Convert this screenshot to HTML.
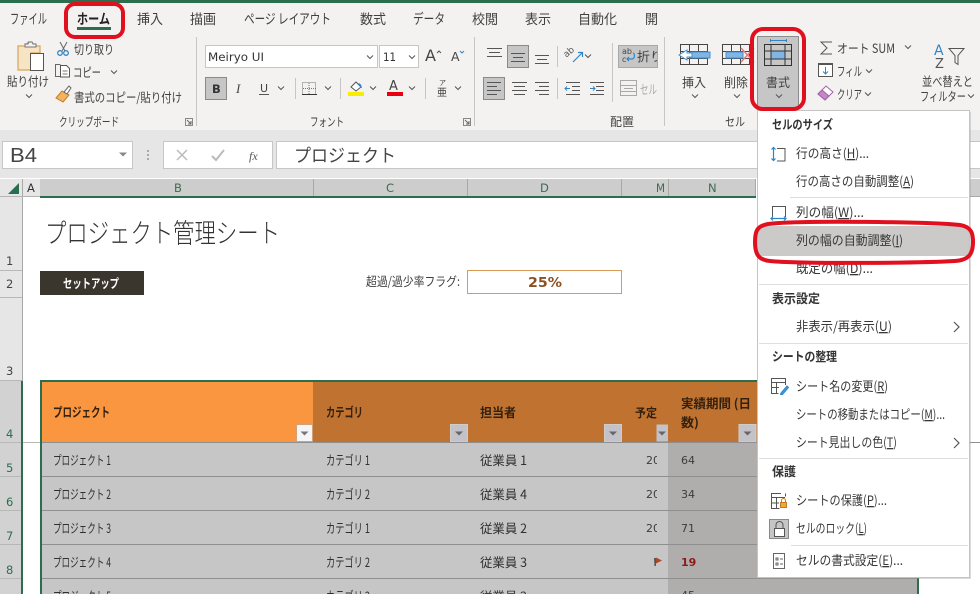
<!DOCTYPE html>
<html lang="ja"><head><meta charset="utf-8"><title>Excel</title>
<style>
html,body{margin:0;padding:0;background:#fff;width:980px;height:594px;overflow:hidden}
svg{display:block;position:absolute;left:0;top:0}
text{font-family:"Liberation Sans","Noto Sans CJK JP",sans-serif;fill:#404040;font-size:11.5px;white-space:pre}
.j{font-family:"Noto Sans CJK JP","Liberation Sans",sans-serif;font-weight:400}
.l{font-family:"Noto Sans CJK JP","Liberation Sans",sans-serif;font-weight:300}
.b{font-family:"Noto Sans CJK JP","Liberation Sans",sans-serif;font-weight:700}
.m{font-family:"Noto Sans CJK JP",sans-serif;font-weight:400;fill:#383838;font-size:13px}
.h{font-family:"Noto Sans CJK JP",sans-serif;font-weight:700;fill:#333;font-size:12.5px}
.u{text-decoration:underline}
</style></head><body>
<svg width="980" height="594" viewBox="0 0 980 594" xmlns="http://www.w3.org/2000/svg">
<defs>
<path id="v" d="M-3 -1.5L0 1.5L3 -1.5" fill="none" stroke="#555" stroke-width="1"/>
<g id="fb"><rect width="17" height="17" fill="#c2c2c8" stroke="#d0ccc8" stroke-width="1"/><path d="M4.5 7h8l-4 4z" fill="#666"/></g>
</defs>

<!-- base -->
<rect width="980" height="594" fill="#fff"/>
<rect width="980" height="130" fill="#f3f2f1"/>
<rect width="980" height="3" fill="#2b6e4e"/>
<rect y="130" width="980" height="48" fill="#e6e6e6"/>

<!-- tabs -->
<text class="j" style="font-size:14px" x="10" y="24" textLength="37" lengthAdjust="spacingAndGlyphs">ファイル</text>
<text class="b" style="font-size:14px;fill:#222" x="77" y="24" textLength="33" lengthAdjust="spacingAndGlyphs">ホーム</text>
<rect x="77" y="27" width="34" height="3" fill="#2b6e4e"/>
<text class="j" style="font-size:13.5px" x="137" y="24" textLength="26" lengthAdjust="spacingAndGlyphs">挿入</text>
<text class="j" style="font-size:13.5px" x="190" y="24" textLength="26" lengthAdjust="spacingAndGlyphs">描画</text>
<text class="j" style="font-size:14px" x="244" y="24" textLength="87" lengthAdjust="spacingAndGlyphs">ページ レイアウト</text>
<text class="j" style="font-size:13.5px" x="360" y="24" textLength="26" lengthAdjust="spacingAndGlyphs">数式</text>
<text class="j" style="font-size:14px" x="413" y="24" textLength="32" lengthAdjust="spacingAndGlyphs">データ</text>
<text class="j" style="font-size:13.5px" x="472" y="24" textLength="26" lengthAdjust="spacingAndGlyphs">校閲</text>
<text class="j" style="font-size:13.5px" x="525" y="24" textLength="26" lengthAdjust="spacingAndGlyphs">表示</text>
<text class="j" style="font-size:13.5px" x="578" y="24" textLength="39" lengthAdjust="spacingAndGlyphs">自動化</text>
<text class="j" style="font-size:13.5px" x="645" y="24" textLength="13" lengthAdjust="spacingAndGlyphs">開</text>

<!-- group separators -->
<g fill="#c8c6c4">
<rect x="196" y="37" width="1" height="89"/><rect x="474" y="37" width="1" height="89"/><rect x="664" y="37" width="1" height="89"/>
<rect x="295" y="78" width="1" height="21"/><rect x="340" y="78" width="1" height="21"/><rect x="425" y="78" width="1" height="21"/>
<rect x="557" y="46" width="1" height="21"/><rect x="557" y="78" width="1" height="21"/><rect x="612" y="43" width="1" height="59"/>
</g>

<!-- clipboard -->
<path d="M18 46h7v-2h2l1-2h4l1 2h2v2h5v7h-9v17h-13z" fill="#f6e4c4" stroke="#d9a45a" stroke-width="1.2"/>
<path d="M25 47v-3h3l1-2h3l1 2h3v3z" fill="#f3f2f1" stroke="#777"/>
<rect x="30.500" y="53.500" width="13" height="17" fill="#fff" stroke="#555"/>
<text class="j" style="font-size:12.5px" x="7" y="86" textLength="42" lengthAdjust="spacingAndGlyphs">貼り付け</text>
<use href="#v" x="29" y="96"/>
<path d="M60 42l5 9M67 42l-5 9" stroke="#666" fill="none"/><circle cx="60" cy="53" r="2.300" fill="none" stroke="#2e86c8" stroke-width="1.300"/><circle cx="66" cy="53" r="2.300" fill="none" stroke="#2e86c8" stroke-width="1.300"/>
<text class="j" style="font-size:12.5px" x="74" y="54" textLength="40" lengthAdjust="spacingAndGlyphs">切り取り</text>
<path d="M61 76.500h-5.500v-12h5" fill="none" stroke="#666"/><path d="M60.500 65.500h6l3 3v8.500h-9z" fill="#fff" stroke="#555"/><path d="M62.500 71h5M62.500 74h5" stroke="#777"/>
<text class="j" style="font-size:12.5px" x="73" y="77" textLength="28" lengthAdjust="spacingAndGlyphs">コピー</text>
<use href="#v" x="114" y="72"/>
<path d="M56 98l6-7 7 4-6 7z" fill="#f0b460" stroke="#c87a20"/><path d="M64 92l5-6 2 2-4 6z" fill="#fff" stroke="#666"/>
<text class="j" style="font-size:12.5px" x="74" y="102" textLength="108" lengthAdjust="spacingAndGlyphs">書式のコピー/貼り付け</text>
<text class="j" style="font-size:12px" x="59" y="126" textLength="60" lengthAdjust="spacingAndGlyphs">クリップボード</text>
<g fill="none" stroke="#666"><path d="M185.500 125.500v-7h7v7z" stroke="#888"/><path d="M187 120l4 4M191 121v3h-3"/></g>

<!-- font -->
<rect x="205.500" y="45.500" width="172" height="22" fill="#fff" stroke="#c6c6c6"/>
<text x="208" y="61" style="font-family:'DejaVu Sans';font-size:11.500px;fill:#333" textLength="56" lengthAdjust="spacingAndGlyphs">Meiryo UI</text>
<use href="#v" x="370" y="57"/>
<rect x="379.500" y="45.500" width="39" height="22" fill="#fff" stroke="#c6c6c6"/>
<text x="383" y="61" style="font-family:'DejaVu Sans';font-size:11.500px;fill:#333" textLength="13" lengthAdjust="spacingAndGlyphs">11</text>
<use href="#v" x="412" y="57"/>
<text x="425" y="61" style="font-family:'DejaVu Sans';font-size:16px;fill:#444">A</text>
<path d="M437 53l2-2 2 2" fill="none" stroke="#555"/>
<text x="451" y="61" style="font-family:'DejaVu Sans';font-size:12.500px;fill:#444">A</text>
<path d="M460 51l2 2 2-2" fill="none" stroke="#2e86c8"/>
<rect x="205.500" y="77.500" width="21" height="22" fill="#c6c6c6" stroke="#8a8a8a"/>
<text x="212" y="93" style="font-family:'DejaVu Sans';font-weight:700;font-size:11.500px;fill:#333">B</text>
<text x="236" y="93" style="font-family:'Liberation Serif';font-style:italic;font-size:13px;fill:#444">I</text>
<text x="260" y="92" style="font-family:'DejaVu Sans';font-size:11px;fill:#444">U</text><rect x="259" y="94" width="10" height="1" fill="#555"/>
<use href="#v" x="281" y="88"/>
<g fill="none" stroke="#777" stroke-dasharray="1 1"><rect x="302.500" y="82.500" width="13" height="12"/><path d="M309 83v11M303 88.500h13"/></g><rect x="302" y="94" width="15" height="1" fill="#333"/>
<use href="#v" x="328" y="88"/>
<path d="M351 87l5-5 5 5-5 4z" fill="#fff" stroke="#555"/><path d="M358 84c2 0 3 1 3 4" fill="none" stroke="#2e86c8" stroke-width="1.500"/>
<rect x="348" y="92" width="16" height="4" fill="#f8ec00"/>
<use href="#v" x="373" y="88"/>
<text x="389" y="90" style="font-family:'DejaVu Sans';font-size:13px;fill:#444">A</text>
<rect x="387" y="92" width="16" height="4" fill="#e8000f"/>
<use href="#v" x="412" y="88"/>
<text class="j" style="font-size:7px" x="439" y="85">ア</text><text class="j" style="font-size:10px" x="437" y="96">亜</text>
<use href="#v" x="458" y="88"/>
<text class="j" style="font-size:12px" x="310" y="126" textLength="34" lengthAdjust="spacingAndGlyphs">フォント</text>
<g fill="none" stroke="#666"><path d="M463.500 125.500v-7h7v7z" stroke="#888"/><path d="M465 120l4 4M469 121v3h-3"/></g>

<!-- alignment -->
<path d="M487 48.500h15M489 52.500h11M487 56.500h15" stroke="#555" fill="none"/>
<rect x="507.500" y="45.500" width="21" height="22" fill="#c6c6c6" stroke="#8a8a8a"/>
<path d="M511 53.500h14M513 57.500h10M511 61.500h14" stroke="#555" fill="none"/>
<path d="M535 55.500h14M537 59.500h10M535 63.500h14" stroke="#555" fill="none"/>
<text x="566" y="55" transform="rotate(-40 570 56)" style="font-family:'DejaVu Sans';font-size:9px;fill:#555">ab</text>
<path d="M573 62l9-9M578 52.500h4.500v4.500" fill="none" stroke="#2e86c8" stroke-width="1.200"/>
<use href="#v" x="588" y="56"/>
<rect x="618.500" y="45.500" width="39" height="22" fill="#c6c6c6" stroke="#a8a8a8"/>
<text x="622" y="54" style="font-family:'DejaVu Sans';font-size:8px;fill:#444">ab</text><text x="622" y="62" style="font-family:'DejaVu Sans';font-size:8px;fill:#444">c</text>
<path d="M633 53c2 0 2 6-1 6h-5M629 57l-2 2 2 2" fill="none" stroke="#2e86c8" stroke-width="1.200"/>
<svg x="618" y="45" width="39" height="23"><text class="j" style="font-size:12.5px" x="19" y="16" textLength="26" lengthAdjust="spacingAndGlyphs">折り</text></svg>
<rect x="483.500" y="77.500" width="21" height="22" fill="#c6c6c6" stroke="#8a8a8a"/>
<path d="M487 82.500h14M487 86.500h10M487 90.500h14M487 94.500h10" stroke="#555" fill="none"/>
<path d="M512 82.500h15M514 86.500h11M512 90.500h15M514 94.500h11" stroke="#555" fill="none"/>
<path d="M535 82.500h14M539 86.500h10M535 90.500h14M539 94.500h10" stroke="#555" fill="none"/>
<path d="M566 82.500h14M572 86.500h8M572 90.500h8M566 94.500h14" stroke="#555" fill="none"/><path d="M570 88.500h-5M567 86.500l-2 2 2 2" stroke="#2e86c8" fill="none"/>
<path d="M590 82.500h14M596 86.500h8M596 90.500h8M590 94.500h14" stroke="#555" fill="none"/><path d="M590 88.500h5M593 86.500l2 2-2 2" stroke="#2e86c8" fill="none"/>
<g fill="none" stroke="#a8a8a8"><rect x="620.500" y="80.500" width="16" height="15"/><path d="M620 85.500h17M620 91.500h17M624 88.500h9"/></g>
<text class="j" style="font-size:12.5px;fill:#a8a8a8" x="640" y="94" textLength="17" lengthAdjust="spacingAndGlyphs">セル</text>
<text class="j" style="font-size:12px" x="610" y="126" textLength="24" lengthAdjust="spacingAndGlyphs">配置</text>

<!-- cells -->
<g fill="none" stroke="#444"><rect x="680.500" y="44.500" width="27" height="20"/><path d="M689.500 44v21M698.500 44v21M680 51.500h28M680 58.500h28"/></g>
<rect x="690" y="52" width="20" height="6" fill="#7fb6e6" stroke="#4a90cc"/>
<path d="M687 50l-8 5 8 5v-3h5v-4h-5z" fill="#fff" stroke="#4a90cc"/>
<text class="j" style="font-size:12.5px" x="682" y="87" textLength="24" lengthAdjust="spacingAndGlyphs">挿入</text>
<use href="#v" x="695" y="96"/>
<g fill="none" stroke="#444"><rect x="722.500" y="44.500" width="27" height="20"/><path d="M731.500 44v21M740.500 44v21M722 51.500h28M722 58.500h28"/></g>
<rect x="726" y="52" width="17" height="6" fill="#7fb6e6" stroke="#4a90cc"/>
<path d="M741 48l13 14M754 48l-13 14" stroke="#e87878" stroke-width="1.500" fill="none"/>
<text class="j" style="font-size:12.5px" x="724" y="87" textLength="24" lengthAdjust="spacingAndGlyphs">削除</text>
<use href="#v" x="737" y="96"/>
<rect x="757.500" y="36.500" width="41" height="72" fill="#c6c6c6" stroke="#8c8c8c"/>
<path d="M770.500 40.500h16M770.500 39v3M786.500 39v3" stroke="#2e86c8" fill="none"/>
<g fill="none" stroke="#333"><rect x="764.500" y="44.500" width="27" height="21"/></g>
<rect x="771" y="51" width="14" height="8" fill="#7fb6e6"/>
<g fill="none" stroke="#333"><path d="M771 44v22M785 44v22M764 51h28M764 59h28"/></g>
<text class="j" style="font-size:12.5px" x="766" y="87" textLength="24" lengthAdjust="spacingAndGlyphs">書式</text>
<use href="#v" x="779" y="96"/>
<text class="j" style="font-size:12px" x="725" y="126" textLength="20" lengthAdjust="spacingAndGlyphs">セル</text>

<!-- editing -->
<path d="M832 42h-11l6 6-6 6h11" fill="none" stroke="#555"/>
<text class="j" style="font-size:12.5px" x="837" y="53" textLength="58" lengthAdjust="spacingAndGlyphs">オート SUM</text>
<use href="#v" x="908" y="47"/>
<rect x="818.500" y="63.500" width="14" height="13" fill="#fff" stroke="#555"/><rect x="818" y="63" width="15" height="2" fill="#555"/>
<path d="M825.500 67v7M823 71.500l2.500 2.500 2.500-2.500" fill="none" stroke="#2e86c8"/>
<text class="j" style="font-size:12.5px" x="837" y="76" textLength="25" lengthAdjust="spacingAndGlyphs">フィル</text>
<use href="#v" x="869" y="71"/>
<path d="M818 94l8-8 7 6-8 8z" fill="#fff" stroke="#a060a8"/><path d="M818 94l4-4 7 6-4 4z" fill="#c487c8" stroke="#a060a8"/>
<text class="j" style="font-size:12.5px" x="837" y="99" textLength="25" lengthAdjust="spacingAndGlyphs">クリア</text>
<use href="#v" x="868" y="94"/>
<text x="934" y="55" style="font-family:'DejaVu Sans';font-size:14px;fill:#2e86c8">A</text>
<text x="935" y="68" style="font-family:'DejaVu Sans';font-size:13px;fill:#555">Z</text>
<path d="M949 48.500h15l-6 7v9l-3-2v-7z" fill="none" stroke="#555"/>
<text class="j" style="font-size:12.5px" x="922" y="86" textLength="51" lengthAdjust="spacingAndGlyphs">並べ替えと</text>
<text class="j" style="font-size:12.5px" x="920" y="101" textLength="46" lengthAdjust="spacingAndGlyphs">フィルター</text>
<use href="#v" x="971" y="96"/>

<!-- formula bar -->
<rect x="2.500" y="141.500" width="130" height="27" fill="#fff" stroke="#c6c6c6"/>
<text x="10" y="162" style="font-family:'Liberation Sans';font-size:20px;fill:#444" textLength="27" lengthAdjust="spacingAndGlyphs">B4</text>
<path d="M119 152.500h8l-4 4z" fill="#888"/>
<g fill="#aaa"><rect x="147" y="150" width="2" height="2"/><rect x="147" y="154" width="2" height="2"/><rect x="147" y="158" width="2" height="2"/></g>
<rect x="163.500" y="141.500" width="109" height="27" fill="#fff" stroke="#c6c6c6"/>
<path d="M177 150l10 10M187 150l-10 10" stroke="#bbb" stroke-width="1.500" fill="none"/>
<path d="M212 156l4 4 8-10" stroke="#bbb" stroke-width="2" fill="none"/>
<text x="249" y="160" style="font-family:'Liberation Serif';font-style:italic;font-size:12px;fill:#555">fx</text>
<rect x="276.500" y="141.500" width="710" height="27" fill="#fff" stroke="#c6c6c6"/>
<text class="j" style="font-size:18px;fill:#444" x="294" y="162" textLength="102" lengthAdjust="spacingAndGlyphs">プロジェクト</text>

<!-- column headers -->
<rect x="40" y="179" width="716" height="17" fill="#cdcdcd"/>
<rect x="970" y="179" width="10" height="17" fill="#cdcdcd"/>
<rect x="0" y="179" width="40" height="18" fill="#e6e6e6"/>
<path d="M8 194h11v-11z" fill="#2b6e4e"/>
<rect x="22" y="179" width="1" height="415" fill="#a8a8a8"/>
<text x="27" y="192" style="font-family:'DejaVu Sans';font-size:11.5px;fill:#333">A</text>
<rect x="0" y="196" width="40" height="1" fill="#b4b4b4"/>
<rect x="40" y="196" width="716" height="2" fill="#2b6e4e"/>
<rect x="970" y="196" width="10" height="1" fill="#a8a8a8"/>
<g fill="#a8a8a8"><rect x="313" y="179" width="1" height="17"/><rect x="467" y="179" width="1" height="17"/><rect x="621" y="179" width="1" height="17"/><rect x="668" y="179" width="1" height="17"/><rect x="755" y="179" width="1" height="17"/></g>
<text x="174" y="192" style="font-family:'DejaVu Sans';font-size:11.500px;fill:#3c6b50">B</text>
<text x="386" y="192" style="font-family:'DejaVu Sans';font-size:11.500px;fill:#3c6b50">C</text>
<text x="540" y="192" style="font-family:'DejaVu Sans';font-size:11.500px;fill:#3c6b50">D</text>
<text x="656" y="192" style="font-family:'DejaVu Sans';font-size:11.500px;fill:#3c6b50" textLength="9" lengthAdjust="spacingAndGlyphs">M</text>
<text x="708" y="192" style="font-family:'DejaVu Sans';font-size:11.500px;fill:#3c6b50">N</text>

<!-- row headers -->
<rect x="0" y="197" width="22" height="397" fill="#e6e6e6"/>
<rect x="0" y="381" width="21" height="213" fill="#d2d2d2"/>
<g fill="#b8b8b8"><rect y="270" width="22" height="1"/><rect y="297" width="22" height="1"/><rect y="380" width="22" height="1"/><rect y="442" width="40" height="1"/><rect y="476" width="22" height="1"/><rect y="510" width="22" height="1"/><rect y="544" width="22" height="1"/><rect y="578" width="22" height="1"/></g>
<rect x="21" y="381" width="2" height="213" fill="#2b6e4e"/>
<text x="6" y="265" style="font-family:'DejaVu Sans';font-size:11.500px;fill:#444">1</text>
<text x="6" y="288" style="font-family:'DejaVu Sans';font-size:11.500px;fill:#444">2</text>
<text x="6" y="375" style="font-family:'DejaVu Sans';font-size:11.500px;fill:#444">3</text>
<text x="6" y="438" style="font-family:'DejaVu Sans';font-size:11.500px;fill:#2b6e4e">4</text>
<text x="6" y="472" style="font-family:'DejaVu Sans';font-size:11.500px;fill:#2b6e4e">5</text>
<text x="6" y="506" style="font-family:'DejaVu Sans';font-size:11.500px;fill:#2b6e4e">6</text>
<text x="6" y="540" style="font-family:'DejaVu Sans';font-size:11.500px;fill:#2b6e4e">7</text>
<text x="6" y="574" style="font-family:'DejaVu Sans';font-size:11.500px;fill:#2b6e4e">8</text>

<!-- sheet top -->
<text class="l" style="font-size:27px;fill:#333" x="45" y="243" textLength="235" lengthAdjust="spacingAndGlyphs">プロジェクト管理シート</text>
<rect x="40" y="271" width="104" height="24" fill="#3a362d"/>
<text class="b" style="font-size:12.5px;fill:#fff" x="63" y="288" textLength="56" lengthAdjust="spacingAndGlyphs">セットアップ</text>
<text class="j" style="font-size:12.5px;fill:#404040" x="366" y="286" textLength="94" lengthAdjust="spacingAndGlyphs">超過/過少率フラグ:</text>
<rect x="467.500" y="270.500" width="154" height="23" fill="#fff" stroke="#d99a55"/>
<text x="528" y="287" style="font-family:'DejaVu Sans';font-weight:700;font-size:13px;fill:#8b5022" textLength="34" lengthAdjust="spacingAndGlyphs">25%</text>

<!-- table -->
<rect x="42" y="382" width="875" height="212" fill="#c6c6c6"/>
<rect x="668" y="442" width="249" height="152" fill="#b0aeac"/>
<rect x="42" y="382" width="271" height="60" fill="#fa9640"/>
<rect x="313" y="382" width="604" height="60" fill="#c07330"/>
<rect x="41" y="380" width="876" height="2" fill="#2b6e4e"/>
<rect x="40" y="380" width="2" height="214" fill="#2b6e4e"/>
<rect x="917" y="577" width="2" height="17" fill="#2b6e4e"/>
<g fill="#8f8f8f"><rect x="42" y="442" width="715" height="1"/><rect x="42" y="476" width="715" height="1"/><rect x="42" y="510" width="715" height="1"/><rect x="42" y="544" width="715" height="1"/><rect x="42" y="578" width="875" height="1"/><rect x="970" y="442" width="10" height="1"/></g>

<text class="b" style="font-size:13px;fill:#33200f" x="53" y="417" textLength="57" lengthAdjust="spacingAndGlyphs">プロジェクト</text>
<text class="b" style="font-size:13px;fill:#33200f" x="326" y="417" textLength="37" lengthAdjust="spacingAndGlyphs">カテゴリ</text>
<text class="b" style="font-size:12.5px;fill:#33200f" x="480" y="417" textLength="36" lengthAdjust="spacingAndGlyphs">担当者</text>
<text class="b" style="font-size:12px;fill:#33200f" x="635" y="417" textLength="22" lengthAdjust="spacingAndGlyphs">予定</text>
<text class="b" style="font-size:12.5px;fill:#33200f" x="681" y="408" textLength="70" lengthAdjust="spacingAndGlyphs">実績期間 (日</text>
<text class="b" style="font-size:12.5px;fill:#33200f" x="681" y="427" textLength="18" lengthAdjust="spacingAndGlyphs">数)</text>

<rect x="296.500" y="424.500" width="16" height="17" fill="#f5f5f8" stroke="#cfa27a"/><path d="M300.500 431.500h8l-4 4z" fill="#777"/>
<use href="#fb" x="450.500" y="424.500"/><use href="#fb" x="604.500" y="424.500"/><use href="#fb" x="739" y="424.500"/>
<svg x="656" y="424" width="12" height="18"><rect x=".5" y=".5" width="17" height="17" fill="#c2c2c8"/><path d="M2 7.500h8l-4 4z" fill="#666"/></svg>

<text class="j" x="53" y="465" textLength="58" lengthAdjust="spacingAndGlyphs" style="font-size:13px;fill:#303030">プロジェクト 1</text>
<text class="j" x="53" y="499" textLength="58" lengthAdjust="spacingAndGlyphs" style="font-size:13px;fill:#303030">プロジェクト 2</text>
<text class="j" x="53" y="533" textLength="58" lengthAdjust="spacingAndGlyphs" style="font-size:13px;fill:#303030">プロジェクト 3</text>
<text class="j" x="53" y="567" textLength="58" lengthAdjust="spacingAndGlyphs" style="font-size:13px;fill:#303030">プロジェクト 4</text>
<text class="j" x="53" y="601" textLength="58" lengthAdjust="spacingAndGlyphs" style="font-size:13px;fill:#303030">プロジェクト 5</text>
<text class="j" x="326" y="465" textLength="44" lengthAdjust="spacingAndGlyphs" style="font-size:13px;fill:#303030">カテゴリ 1</text>
<text class="j" x="326" y="499" textLength="44" lengthAdjust="spacingAndGlyphs" style="font-size:13px;fill:#303030">カテゴリ 2</text>
<text class="j" x="326" y="533" textLength="44" lengthAdjust="spacingAndGlyphs" style="font-size:13px;fill:#303030">カテゴリ 1</text>
<text class="j" x="326" y="567" textLength="44" lengthAdjust="spacingAndGlyphs" style="font-size:13px;fill:#303030">カテゴリ 2</text>
<text class="j" x="326" y="601" textLength="44" lengthAdjust="spacingAndGlyphs" style="font-size:13px;fill:#303030">カテゴリ 3</text>
<text class="j" x="480" y="465" textLength="47" lengthAdjust="spacingAndGlyphs" style="font-size:12.5px;fill:#303030">従業員 1</text>
<text class="j" x="480" y="499" textLength="47" lengthAdjust="spacingAndGlyphs" style="font-size:12.5px;fill:#303030">従業員 4</text>
<text class="j" x="480" y="533" textLength="47" lengthAdjust="spacingAndGlyphs" style="font-size:12.5px;fill:#303030">従業員 2</text>
<text class="j" x="480" y="567" textLength="47" lengthAdjust="spacingAndGlyphs" style="font-size:12.5px;fill:#303030">従業員 3</text>
<text class="j" x="480" y="601" textLength="47" lengthAdjust="spacingAndGlyphs" style="font-size:12.5px;fill:#303030">従業員 2</text>
<svg x="640" y="445" width="17" height="149">
<text x="6" y="19" style="font-family:'DejaVu Sans';font-size:11px;fill:#3c3c3c">20</text>
<text x="6" y="53" style="font-family:'DejaVu Sans';font-size:11px;fill:#3c3c3c">20</text>
<text x="6" y="87" style="font-family:'DejaVu Sans';font-size:11px;fill:#3c3c3c">20</text>
</svg>
<path d="M654 558h2v8h-1.500z" fill="#555"/><path d="M656 557.500l6 3-6 3z" fill="#a8492a"/>
<text x="681" y="464" style="font-family:'DejaVu Sans';font-size:11px;fill:#3c3c3c">64</text>
<text x="681" y="498" style="font-family:'DejaVu Sans';font-size:11px;fill:#3c3c3c">34</text>
<text x="681" y="532" style="font-family:'DejaVu Sans';font-size:11px;fill:#3c3c3c">71</text>
<text x="681" y="566" style="font-family:'DejaVu Sans';font-weight:700;font-size:11px;fill:#8c1a1a">19</text>
<text x="681" y="599" style="font-family:'DejaVu Sans';font-size:11px;fill:#3c3c3c">45</text>

<!-- menu -->
<rect x="759" y="112" width="212" height="467" fill="#999" opacity=".35"/>
<rect x="757.500" y="110.500" width="212" height="467" fill="#fff" stroke="#c4c4c4"/>
<rect x="758" y="226" width="211" height="30" fill="#cbcac8"/>
<g fill="#dedede"><rect x="790" y="197" width="178" height="1"/><rect x="759" y="284" width="209" height="1"/><rect x="759" y="343" width="209" height="1"/><rect x="759" y="458" width="209" height="1"/><rect x="791" y="545" width="177" height="1"/></g>

<text class="h" x="772" y="129" textLength="61" lengthAdjust="spacingAndGlyphs">セルのサイズ</text>
<text class="h" x="772" y="303" textLength="48" lengthAdjust="spacingAndGlyphs">表示設定</text>
<text class="h" x="772" y="361" textLength="65" lengthAdjust="spacingAndGlyphs">シートの整理</text>
<text class="h" x="772" y="476" textLength="24" lengthAdjust="spacingAndGlyphs">保護</text>

<text class="m" x="796" y="158" textLength="73" lengthAdjust="spacingAndGlyphs">行の高さ(<tspan class="u">H</tspan>)...</text>
<text class="m" x="796" y="186" textLength="118" lengthAdjust="spacingAndGlyphs">行の高さの自動調整(<tspan class="u">A</tspan>)</text>
<text class="m" x="796" y="217" textLength="68" lengthAdjust="spacingAndGlyphs">列の幅(<tspan class="u">W</tspan>)...</text>
<text class="m" x="796" y="245" textLength="107" lengthAdjust="spacingAndGlyphs">列の幅の自動調整(<tspan class="u">I</tspan>)</text>
<text class="m" x="796" y="273" textLength="77" lengthAdjust="spacingAndGlyphs">既定の幅(<tspan class="u">D</tspan>)...</text>
<text class="m" x="796" y="331" textLength="96" lengthAdjust="spacingAndGlyphs">非表示/再表示(<tspan class="u">U</tspan>)</text>
<text class="m" x="796" y="391" textLength="92" lengthAdjust="spacingAndGlyphs">シート名の変更(<tspan class="u">R</tspan>)</text>
<text class="m" x="796" y="419" textLength="149" lengthAdjust="spacingAndGlyphs">シートの移動またはコピー(<tspan class="u">M</tspan>)...</text>
<text class="m" x="796" y="447" textLength="101" lengthAdjust="spacingAndGlyphs">シート見出しの色(<tspan class="u">T</tspan>)</text>
<text class="m" x="796" y="505" textLength="91" lengthAdjust="spacingAndGlyphs">シートの保護(<tspan class="u">P</tspan>)...</text>
<text class="m" x="796" y="533" textLength="71" lengthAdjust="spacingAndGlyphs">セルのロック(<tspan class="u">L</tspan>)</text>
<text class="m" x="796" y="565" textLength="107" lengthAdjust="spacingAndGlyphs">セルの書式設定(<tspan class="u">E</tspan>)...</text>
<path d="M954 322l5 5-5 5M954 438l5 5-5 5" fill="none" stroke="#555" stroke-width="1.200"/>

<!-- menu icons -->
<path d="M777 148.500h8v12.500h-8" fill="none" stroke="#555"/>
<path d="M773.500 147v14M771.500 149.500l2-2 2 2M771.500 158.500l2 2 2-2" fill="none" stroke="#2e86c8" stroke-width="1.200"/>
<path d="M772.500 217v-10.500h13v10.500" fill="none" stroke="#555"/>
<path d="M771 218.500h15M773 216.500l-2 2 2 2M784 216.500l2 2-2 2" fill="none" stroke="#2e86c8" stroke-width="1.200"/>
<g fill="none" stroke="#555"><path d="M785.500 385v-6.500h-14v15h7M771 382.500h14M771 387.500h8M776.500 382v11"/></g>
<path d="M781 393l6-7 1.500 1.500-6 7h-2z" fill="#4a9ad8" stroke="#2e86c8"/>
<g fill="none" stroke="#555"><path d="M781 493.500h-9.500v15h8M771 497.500h14M771 503h8M776.500 497v11M785.500 493.500v3"/></g>
<rect x="780.500" y="502.500" width="6" height="5" fill="#f0a830" stroke="#c87a20"/><path d="M781.500 502.500v-2a2 2 0 0 1 4 0v2" fill="none" stroke="#c87a20"/>
<rect x="769.500" y="519.500" width="19" height="19" fill="#c6c6c6" stroke="#8a8a8a"/>
<rect x="774.500" y="528.500" width="10" height="8" fill="#fff" stroke="#555"/><path d="M776 528.500v-3.500a3.500 3.500 0 0 1 7 0v3.500" fill="none" stroke="#555"/>
<rect x="773.500" y="553.500" width="11" height="15" fill="#fff" stroke="#666"/>
<path d="M776 558h2v2h-2zM776 563h2v2h-2zM780 559h3M780 564h3" fill="none" stroke="#666"/>

<!-- red annotations -->
<g fill="none" stroke="#e0101f" stroke-width="4">
<rect x="66" y="4" width="57" height="33" rx="9"/>
<rect x="752" y="29" width="52" height="80" rx="11"/>
<path d="M768 224C800 220 930 222 960 225C972 227 973 234 973 242C973 255 968 260 955 261C920 263 800 264 770 261C757 260 755 252 755 242C755 231 757 226 768 224Z"/>
</g>
</svg>
</body></html>
